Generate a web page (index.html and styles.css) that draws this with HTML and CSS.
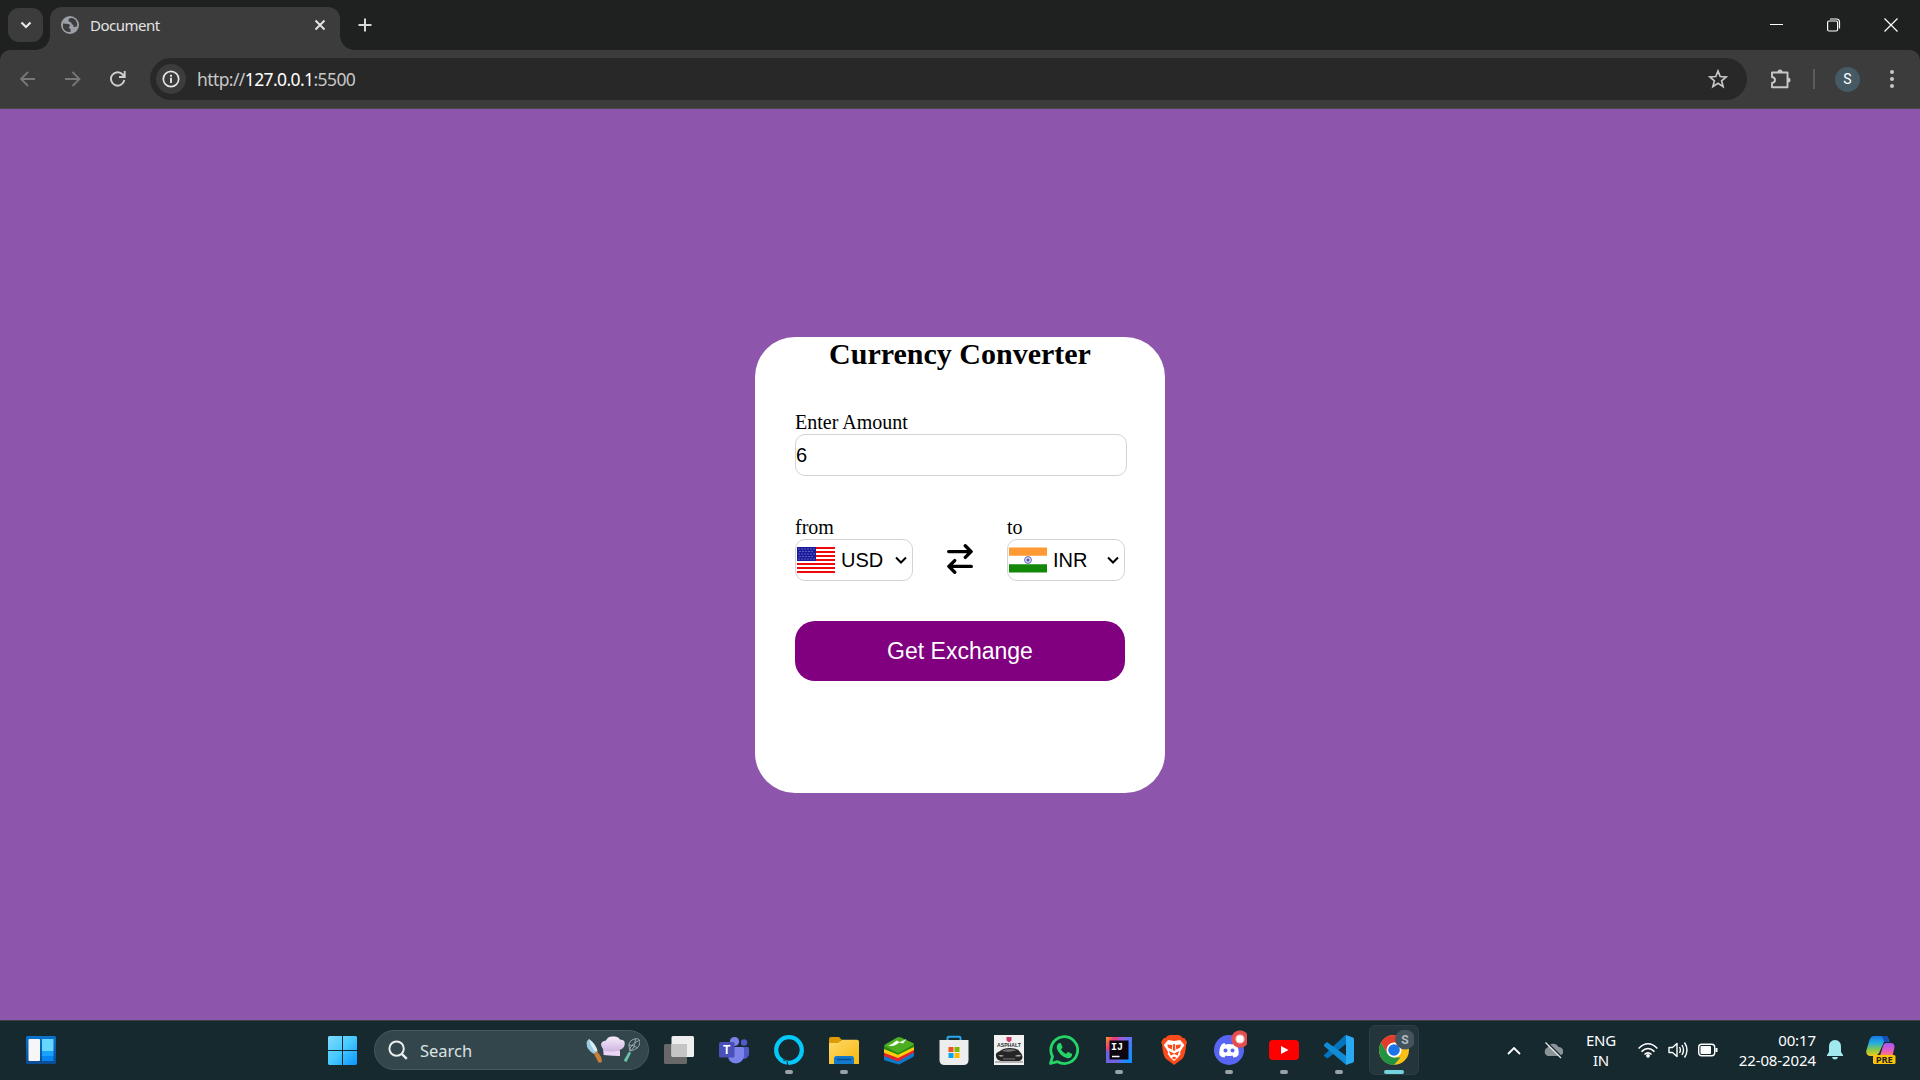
FILE: index.html
```html
<!DOCTYPE html>
<html lang="en">
<head>
<meta charset="utf-8">
<title>Document</title>
<link rel="stylesheet" href="styles.css">
</head>
<body>
<div class="tabstrip">
  <div class="tab-search"><svg width="12" height="8" viewBox="0 0 12 8"><path d="M1.5 1.5 6 6l4.5-4.5" fill="none" stroke="#e8e8e8" stroke-width="2.2"/></svg></div>
  <div class="tab">
    <svg class="globe" width="18" height="18" viewBox="0 0 18 18"><circle cx="9" cy="9" r="9" fill="#9aa0a6"/><path d="M2 7.400 5 7.800Q9 7.800 9.200 9.800L7.500 11.600 9.500 13V16Q4 16.500 2 11.500ZM10.500 2Q7.500 2 7.500 4.400 7.700 6 10 6.200 10.600 8.600 12.500 9L12.300 11 16 10.500Q16.800 4 12 2.200Z" fill="#3c3c3c"/></svg>
    <span class="tab-title">Document</span>
    <svg class="tab-close" width="12" height="12" viewBox="0 0 12 12"><path d="m1.500 1.500 9 9m0-9-9 9" stroke="#e3e3e3" stroke-width="2"/></svg>
  </div>
  <svg class="new-tab" width="14" height="14" viewBox="0 0 14 14"><path d="M7 .5v13M.5 7h13" stroke="#d8d8d8" stroke-width="2"/></svg>
  <div class="window-controls">
    <svg width="14" height="14" viewBox="0 0 14 14"><path d="M0 6.500h13" stroke="#fff"/></svg>
    <svg width="14" height="14" viewBox="0 0 14 14"><path d="M3 1h6.500q3 0 3 3v6.500" fill="none" stroke="#fff" stroke-width="1.200"/><rect x=".6" y="3" width="10" height="10" rx="1.500" fill="none" stroke="#fff" stroke-width="1.200"/></svg>
    <svg width="14" height="14" viewBox="0 0 14 14"><path d="m.5.500 13 13m0-13-13 13" stroke="#fff" stroke-width="1.200"/></svg>
  </div>
</div>
<div class="toolbar-wrap"><div class="toolbar">
  <div class="nav">
    <svg width="16" height="16" viewBox="0 0 16 16"><path d="M15 8H1M8 1 1 8l7 7" fill="none" stroke="#777" stroke-width="1.800"/></svg>
    <svg width="16" height="16" viewBox="0 0 16 16"><path d="M0 8h14M7.500 1l7 7-7 7" fill="none" stroke="#777" stroke-width="1.800"/></svg>
    <svg width="16" height="16" viewBox="0 0 16 16"><path d="M14.300 9A6.700 6.700 0 1 1 12.700 3.500L14.500 5.500M14.700 0V6H9" fill="none" stroke="#cfcfcf" stroke-width="1.900"/></svg>
  </div>
  <div class="omnibox">
    <div class="info"><svg width="18" height="18" viewBox="0 0 18 18"><circle cx="9" cy="9" r="7.700" fill="none" stroke="#e3e3e3" stroke-width="1.700"/><path d="M9 7.800V13M9 4.800v2" stroke="#e3e3e3" stroke-width="1.900"/></svg></div>
    <span class="url">http://<b>127.0.0.1</b>:5500</span>
    <svg class="star" width="20" height="20" viewBox="0 0 20 20"><path d="m10 2 2.200 5.500 6 .4-4.600 3.900 1.500 5.800L10 14.300l-5.100 3.300 1.500-5.800L1.800 7.900l6-.4Z" fill="none" stroke="#c7c7c7" stroke-width="1.700"/></svg>
  </div>
  <svg class="puzzle" width="22" height="22" viewBox="0 0 22 22"><path d="M2 4.500H17.500V19.300H2V15Q5 14.500 5 12T2 9Z" fill="none" stroke="#c7c7c7" stroke-width="1.900" stroke-linejoin="round"/><path d="M7.500 4a2.500 2.500 0 0 1 5 0ZM18 9.500a2.500 2.500 0 0 1 0 5Z" fill="#c7c7c7"/></svg>
  <div class="divider"></div>
  <div class="avatar">S</div>
  <svg class="dots" width="6" height="20" viewBox="0 0 6 20"><g fill="#c7c7c7"><circle cx="3" cy="3" r="2"/><circle cx="3" cy="10" r="2"/><circle cx="3" cy="17" r="2"/></g></svg>
</div></div>

<main class="page">
  <div class="card">
    <h2>Currency Converter</h2>
    <div class="amount"><p>Enter Amount</p><div class="field amount-field">6</div></div>
    <div class="dropdowns">
      <div class="currency"><p>from</p>
        <div class="field select">
          <svg width="38" height="26" viewBox="0 0 38 26"><path fill="#fff" d="M0 0h38v26H0z"/><path d="M0 1h38M0 5h38M0 9h38M0 13h38M0 17h38M0 21h38M0 25h38" stroke="#f00b0b" stroke-width="2"/><path fill="#1a1a9c" d="M0 0h19v14H0z"/><path d="M1.500 2h17M2.500 4.500h15M1.500 7h17M2.500 9.500h15M1.500 12h17" stroke="#9d9ddd" stroke-dasharray="1 2"/></svg>
          <span>USD</span>
          <svg class="caret" width="12" height="8" viewBox="0 0 12 8"><path d="M1 1.500l5 5 5-5" fill="none" stroke="#000" stroke-width="2"/></svg>
        </div>
      </div>
      <svg class="swap" width="26" height="30" viewBox="0 0 26 30"><path d="M1.700 7.600h22M18.300 1.800l5.800 5.800-5.800 5.800M24.300 22.400h-22M7.700 16.600l-5.800 5.800 5.800 5.800" fill="none" stroke="#000" stroke-width="3.400" stroke-linecap="round" stroke-linejoin="round"/></svg>
      <div class="currency"><p>to</p>
        <div class="field select">
          <svg width="38" height="26" viewBox="0 0 38 26"><path fill="#fff" d="M0 0h38v26H0z"/><path fill="#f93" d="M0 .5h38v8.300H0z"/><path fill="#138808" d="M0 17.200h38v8.300H0z"/><circle cx="19" cy="13" r="3.400" fill="#dcdcf2" stroke="#6464bd"/><circle cx="19" cy="13" r="1.500" fill="#5050aa"/></svg>
          <span>INR</span>
          <svg class="caret" width="12" height="8" viewBox="0 0 12 8"><path d="M1 1.500l5 5 5-5" fill="none" stroke="#000" stroke-width="2"/></svg>
        </div>
      </div>
    </div>
    <button class="exchange">Get Exchange</button>
  </div>
</main>

<footer class="taskbar">
  <svg class="widgets" width="30" height="28" viewBox="0 0 30 28"><defs>
    <linearGradient id="wg" x2="0" y2="1"><stop stop-color="#0873cf"/><stop offset="1" stop-color="#0b4c94"/></linearGradient>
    <linearGradient id="win" x2="1" y2="1"><stop stop-color="#80dcff"/><stop offset=".5" stop-color="#45c8ff"/><stop offset="1" stop-color="#0a94ff"/></linearGradient></defs>
    <rect width="30" height="28" rx="1.500" fill="url(#wg)"/><rect x="2.500" y="3" width="11.500" height="22" rx="1" fill="#f6f6f6"/><path fill="#66d6ff" d="M16 3h11.500v12H16z"/><path fill="#18a2fb" d="M16 15h11.500v5H16z"/><path fill="#0486ee" d="M16 20h11.500v5H16z"/></svg>
  <svg class="start" width="29" height="29" viewBox="0 0 29 29"><path d="M1 0h13v14H0V1ZM15 0h13l1 1v13H15ZM0 15h14v14H1l-1-1ZM15 15h14v13l-1 1H15Z" fill="url(#win)"/></svg>
  <div class="search">
    <svg width="20" height="20" viewBox="0 0 20 20"><circle cx="8.600" cy="8.600" r="7.200" fill="none" stroke="#e9eded" stroke-width="2"/><path d="m13.800 13.800 5 5" stroke="#e9eded" stroke-width="2.400"/></svg>
    <span>Search</span>
    <svg class="chef" width="54" height="28" viewBox="0 0 54 28"><defs><linearGradient id="hat" x2="0" y2="1"><stop stop-color="#f5ebfa"/><stop offset="1" stop-color="#c5a5da"/></linearGradient></defs>
      <path d="M3 3Q10 8 11.500 15L8 18Q-1 13 1 5Z" fill="#9bcbe0"/><path d="M3 3Q9 8 11.500 15l-1.500 1Q5 12 3 3Z" fill="#d9eef5"/><path d="m8 18 3-3 3.500 5q2 4 1 6.500h-3Z" fill="#c97e38"/>
      <path d="M17 13Q12 6 20 4.500 22 0 27 .5q5-.5 7 3 6 0 4.500 6-1 3-5 4.500V20l-16-1Z" fill="url(#hat)"/><path d="M18 14.500q7 2 16 0V20l-16-1Z" fill="#e9d7f3"/>
      <path d="m38 24 5-8.500 2 1.500-4.500 9q-2 0-2.500-2Z" fill="#66c6a5"/><g fill="none" stroke="#98a7ad" stroke-width="1"><path d="M44 15Q41 6 47 3.500t7 2Q54 13 44 15ZM44 15q-1-6 9-10.500M44 15q5-2 5.500-12M42.500 9q6 0 9 3"/></g></svg>
  </div>
  <div class="apps">
    <div class="app"><svg width="30" height="30" viewBox="0 0 30 30"><rect y="9" width="23" height="20" rx="1.500" fill="#686868"/><rect x="7.500" y="1" width="22.500" height="21" rx="1.500" fill="#eee"/><path fill="#c5c5c5" d="M7.500 9H23v11q0 2-1.500 2H9q-1.500 0-1.500-1.500Z"/></svg></div>
    <div class="app"><svg width="30" height="30" viewBox="0 0 30 30"><circle cx="15.500" cy="6.500" r="4.600" fill="#7b83eb"/><circle cx="25" cy="7.500" r="3.200" fill="#5059c9"/><path d="M19 12h9.500q1.500 0 1.500 1.500V19q-1 5-6 5-5 0-5-5Z" fill="#5059c9"/><path d="M9 12h14.500q1.500 0 1.500 1.500V21q-1 7-8 7.500-8-.5-8-8.500Z" fill="#7b83eb"/><rect y="7" width="15.500" height="15.500" rx="1.500" fill="#4950b8"/><text x="7.700" y="19.200" class="t-mark">T</text></svg></div>
    <div class="app open"><svg width="30" height="30" viewBox="0 0 30 30"><circle cx="15" cy="15" r="12.800" fill="none" stroke="#05c8fa" stroke-width="4.300"/><path d="M13 30Q13.500 25 8.500 24.500L9.500 25.700 13.500 26.600 14.500 30Z" fill="#15292f"/></svg></div>
    <div class="app open"><svg width="30" height="30" viewBox="0 0 30 30"><defs><linearGradient id="fold" x2="1" y2="1"><stop stop-color="#ffd96b"/><stop offset="1" stop-color="#f8b80e"/></linearGradient></defs><path d="M0 4q0-2 2-2h8l3 3h-1L10 9H0Z" fill="#dd9c05"/><path d="M0 8h9l4-3.200h15q2 0 2 1.700V29H0Z" fill="url(#fold)"/><path d="M5 29v-5.500q0-2.500 2.500-2.500h15q2.500 0 2.500 2.500V29Z" fill="#1379cc"/><path d="M8.500 24.500h13" stroke="#064c8c" stroke-width="1.500" stroke-linecap="round"/></svg></div>
    <div class="app"><svg width="30" height="30" viewBox="0 0 30 30"><path d="M0 20v4q0 1 1 1.500L13 29q2 .8 3 0l13-7q1-.6 1-2v-4Z" fill="#0d79c9"/><path d="M0 17v4l14 5.500 16-9V13Z" fill="#e3222c"/><path d="M0 13.500v4.300L14 23l16-8V9Z" fill="#ffce0b"/><path d="M0 10.500v3.500l14 5.700L30 12V8.500Z" fill="#268a14"/><path d="m1 9.500 12-7q2-1.200 4 0l12 5.500q1.300.7 0 1.700l-13 7.500q-2 1-4 0L1 11.300q-1-.8 0-1.800Z" fill="#4eae21"/><path d="M4 10.500Q9 9 12.500 5.500L16 7l6.500-3-3.500 4.500-4-1Q11 12 4 10.500Z" fill="#f3fff0"/></svg></div>
    <div class="app"><svg width="30" height="30" viewBox="0 0 30 30"><path d="M8.500 6V3q0-1.200 1.200-1.200h10.600Q21.500 1.800 21.500 3v3" fill="none" stroke="#27a8ed" stroke-width="2"/><path d="M.5 5h29v20q0 5-5 5h-19q-5 0-5-5Z" fill="#ededed"/><path fill="#f25022" d="M9.500 12h5v5h-5z"/><path fill="#7fba00" d="M15.500 12h5v5h-5z"/><path fill="#00a4ef" d="M9.500 18h5v5h-5z"/><path fill="#ffb900" d="M15.500 18h5v5h-5z"/></svg></div>
    <div class="app"><svg width="30" height="30" viewBox="0 0 30 30"><path fill="#f1f1f1" d="M0 0h30v30H0z"/><path d="M12.500 2h5v3.500L15 7.500l-2.500-2Z" fill="#c63b68"/><text x="15" y="12" class="asphalt" textLength="24" lengthAdjust="spacingAndGlyphs">ASPHALT</text><path d="M2 21q-1-3 4-5 3-3 10-3 8 0 10 4 2.500 2 2.500 5 0 3-3.500 4H7q-5-1-5-5Z" fill="#252525"/><path d="M7.500 16q3-2 9-2 4 0 6 1.500l-8 1.500Z" fill="#707070"/><path d="M4 20.500q4-1 6 .5l-3 .7ZM21 21q3-2 6-1l-1 1.500h-4Z" fill="#aaa"/><path d="M9 24h12M1 27h28" stroke="#787878"/></svg></div>
    <div class="app"><svg width="30" height="30" viewBox="0 0 30 30"><path d="m1.500 28.500 2-7A13.400 13.400 0 1 1 8.600 26.700Z" fill="none" stroke="#25d366" stroke-width="2.800" stroke-linejoin="round"/><path d="M10.200 8Q11.800 7.500 12.300 9l1.200 3q.2.700-1.500 2.500 2 3.500 5 4.500l1.500-1.800q.5-.4 1.200 0l3 1.500q.8.500.3 2-1.200 2.800-4.500 2.500Q11 21.500 8 14q-1-4.500 2.200-6Z" fill="#25d366"/></svg></div>
    <div class="app open"><svg width="30" height="30" viewBox="0 0 30 30"><defs><linearGradient id="ij" x2="1" y2=".6"><stop stop-color="#f99b28"/><stop offset=".25" stop-color="#f13675"/><stop offset=".5" stop-color="#9463e9"/><stop offset="1" stop-color="#168cff"/></linearGradient></defs><path d="M2 2h26v26H2z" fill="url(#ij)"/><path d="M2 14v14h15Z" fill="#7163df"/><path fill="#0b0610" d="M5.500 5.500h19v19h-19z"/><text x="7" y="15.200" class="ij">IJ</text><path d="M8 21.500h7.500" stroke="#fff" stroke-width="1.500"/></svg></div>
    <div class="app"><svg width="30" height="30" viewBox="0 0 30 30"><g transform="translate(2.200 0) scale(.86 1)"><path d="m7 1 3-1h10l3 1 2 2h2l3 4-1 3Q28 20 25 23.500L15 30 5 23.500Q2 20 1 10L0 7l3-4h2Z" fill="#fb4a1b"/><path d="m8 5 7 1 7-1 5 5-3 4-2 3 .5 2-3.500 4-4 3-4-3-3.500-4 .5-2-2-3-3-4Z" fill="#fff"/><path d="m7 9.500 6 .5-.5 4.500-4.500-2ZM23 9.500l-6 .5.500 4.500 4.500-2ZM14 9h2l.5 6-1.500 1-1.500-1ZM9 16l6 2.500 6-2.500-2 4.500-4-1.500-4 1.500ZM12 23l3-1.500 3 1.500-3 1.500Z" fill="#fb4a1b"/></g></svg></div>
    <div class="app open"><svg width="36" height="40" viewBox="-3 -5 36 40"><circle cx="15" cy="15" r="15" fill="#5865f2"/><path d="M10.500 8 8 9Q4.500 14 5.500 20q2 2.500 5 2.500l1-2q3.500 1 7 0l1 2q3 0 5-2.500 1-6-2.500-11l-2.500-1-1 1.500q-3.500-.8-7 0Z" fill="#fff"/><circle cx="11.500" cy="15.500" r="2" fill="#5865f2"/><circle cx="18.500" cy="15.500" r="2" fill="#5865f2"/><circle cx="26" cy="4" r="8.700" fill="#e34e50"/><circle cx="26" cy="4" r="4.100" fill="#fff" stroke="#f5b6b7"/></svg></div>
    <div class="app open"><svg width="30" height="30" viewBox="0 0 30 30"><rect y="5" width="30" height="20" rx="4" fill="red"/><path d="m12 11 7.500 4-7.500 4Z" fill="#fff"/></svg></div>
    <div class="app open"><svg width="30" height="30" viewBox="0 0 30 30"><path d="M22 0v9L3.500 23.500 0 21v-1L20.500.8Z" fill="#0674bd"/><path d="m0 9.500 3-2.500L23 21.500V30l-2-1L0 11Z" fill="#128bd5"/><path d="m22 0 7 2.500q1 .5 1 1.500v22q0 1-1 1.500L22 30Z" fill="#28a9f1"/></svg></div>
    <div class="app open active"><svg width="40" height="40" viewBox="-5 -5 40 40"><circle cx="15" cy="15" r="15" fill="#fbc116"/><path d="M2 7.500Q6 0 15 0t13 7.500H15L8.500 18.700Z" fill="#e33b2e"/><path d="M2 7.500 8.500 18.800 15 22.500h6.500L15 30Q6 30 2 22.500T2 7.500Z" fill="#229342"/><circle cx="15" cy="15" r="7.500" fill="#fff"/><circle cx="15" cy="15" r="5.800" fill="#1a73e8"/><circle cx="26" cy="4.500" r="10" fill="#43545e"/><text x="26" y="9" class="profile-s">S</text></svg></div>
  </div>
  <div class="tray">
    <svg class="chevron" width="14" height="9" viewBox="0 0 14 9"><path d="m1 8 6-6 6 6" fill="none" stroke="#fff" stroke-width="1.800"/></svg>
    <svg class="cloud" width="20" height="18" viewBox="0 0 20 18"><path d="M5 15a4.500 4.500 0 0 1-.5-8.500 6 6 0 0 1 11-.5 4.500 4.500 0 0 1 .5 9Z" fill="#8a9497"/><path d="M3.800 1 18.800 16" stroke="#15292f" stroke-width="1.500"/><path d="M2.500 1.500 18 17" stroke="#e8eaea" stroke-width="1.300"/></svg>
    <div class="lang"><div>ENG</div><div>IN</div></div>
    <div class="status">
      <svg width="20" height="20" viewBox="0 0 20 20"><g fill="none" stroke="#fff" stroke-width="1.500"><path d="M.6 8.500q9.400-9.400 18.800 0M3.500 11.600q6.500-6.300 13 0M6.500 14.500q3.500-3.300 7 0"/></g><circle cx="10" cy="15.800" r="1.900" fill="#fff"/></svg>
      <svg width="20" height="20" viewBox="0 0 20 20"><g fill="none" stroke="#fff" stroke-width="1.400" stroke-linejoin="round"><path d="M1 7.500h3.500L9 3.500v13l-4.500-4H1ZM11.500 7q1.800 3 0 6M14 5q3 5 0 10M16.500 2.500q5 7.500 0 15"/></g></svg>
      <svg width="20" height="20" viewBox="0 0 20 20"><rect x=".7" y="4.200" width="16" height="11.600" rx="3" fill="none" stroke="#fff" stroke-width="1.400"/><rect x="2.500" y="6" width="10.500" height="8" rx="1" fill="#fff"/><path d="M18.500 8v4" stroke="#fff" stroke-width="2"/></svg>
    </div>
    <div class="clock"><div>00:17</div><div>22-08-2024</div></div>
    <svg class="bell" width="16" height="20" viewBox="0 0 16 20"><path d="M8 0Q14 .5 14 6.500V12l2 3v1H0v-1l2-3V6.500Q2 .5 8 0ZM5 17h6q-.5 2.500-3 2.500T5 17Z" fill="#a0e9ec"/></svg>
    <svg class="copilot" width="30" height="30" viewBox="0 0 30 30"><defs><linearGradient id="ca" x2="0" y2="1"><stop stop-color="#1878e8"/><stop offset=".35" stop-color="#20aee0"/><stop offset=".7" stop-color="#8fc845"/><stop offset="1" stop-color="#f0cc20"/></linearGradient><linearGradient id="cb" x2="0" y2="1"><stop stop-color="#a35af0"/><stop offset=".6" stop-color="#e55bc0"/><stop offset="1" stop-color="#ff855f"/></linearGradient></defs><path d="M8 1h11q3 0 3.500 3l1 3H18l-5 11-3 3H4q-4-.5-3.800-5L3.500 5Q5 1 8 1Z" fill="url(#ca)"/><path d="M15 1h5q2 .5 3 6h-5q-1-5-3-6Z" fill="#164dba"/><path d="M20 8h5q3.500 0 3.500 4l-2 9H14l3-10q.8-3 3-3Z" fill="url(#cb)"/><rect x="7" y="20" width="22.500" height="9" rx="1.500" fill="#fdc30a"/><text x="18.200" y="27.500" class="pre" textLength="17" lengthAdjust="spacingAndGlyphs">PRE</text></svg>
  </div>
</footer>
</body>
</html>
```
FILE: styles.css
```css
* { box-sizing: border-box; margin: 0; padding: 0; }
body { width: 1920px; height: 1080px; overflow: hidden; display: flex; flex-direction: column; font-family: "Noto Sans", sans-serif; }
svg { display: block; flex: none; }

.tabstrip { height: 50px; background: #1f2120; display: flex; align-items: center; padding-left: 8px; }
.tab-search { width: 35px; height: 34px; border-radius: 11px; background: #3c3c3c; display: flex; align-items: center; justify-content: center; }
.tab { position: relative; width: 290px; height: 43px; align-self: flex-end; margin-left: 7px; padding: 0 14px 7px 11px; background: #3c3c3c; border-radius: 12px 12px 0 0; display: flex; align-items: center; }
.tab::before, .tab::after { content: ""; position: absolute; bottom: 0; width: 14px; height: 14px; }
.tab::before { left: -14px; background: radial-gradient(circle at 0 0, transparent 13.500px, #3c3c3c 14px); }
.tab::after { right: -14px; background: radial-gradient(circle at 100% 0, transparent 13.500px, #3c3c3c 14px); }
.tab-title { margin-left: 11px; font-size: 15px; color: #e3e3e3; letter-spacing: -.5px; }
.tab-close { margin-left: auto; }
.new-tab { margin-left: 18px; }
.window-controls { margin-left: auto; margin-right: 22px; display: flex; gap: 43px; }

.toolbar-wrap { height: 59px; background: #1f2120; }
.toolbar { height: 59px; background: #3c3c3c; border-bottom: 1px solid #4c4a4d; border-radius: 10px 10px 0 0; display: flex; align-items: center; padding: 0 25px 0 20px; }
.nav { display: flex; gap: 29px; width: 130px; }
.omnibox { width: 1597px; height: 42px; border-radius: 21px; background: #282828; display: flex; align-items: center; padding: 0 19px 0 6px; }
.info { width: 30px; height: 30px; border-radius: 50%; background: #3c3c3c; display: flex; align-items: center; justify-content: center; }
.url { margin-left: 11px; font-size: 17.500px; letter-spacing: -.6px; color: #c7c7c7; }
.url b { font-weight: 400; color: #fff; }
.star { margin-left: auto; }
.puzzle { margin-left: 23px; }
.divider { width: 2px; height: 20px; margin-left: 21px; background: #5c5c5c; }
.avatar { width: 25px; height: 25px; border-radius: 50%; margin-left: 20px; background: #455a64; color: #fff; font: 14px/25px Roboto, sans-serif; text-align: center; }
.dots { margin-left: auto; }

.page { height: 911px; background: #8d55ac; display: flex; align-items: center; justify-content: center; }
.card { width: 410px; height: 456px; border-radius: 40px; background: #fff; padding: 0 40px; font: 20px/22px "Liberation Serif", serif; color: #000; }
.card h2 { font-size: 30px; line-height: 33px; padding-bottom: 2px; text-align: center; white-space: nowrap; }
.card p { line-height: 21px; padding-bottom: 1px; }
.amount { margin-top: 40px; }
.field { border: 1px solid #d3d3d3; border-radius: 10px; height: 42px; font-family: "Liberation Sans", sans-serif; font-size: 20px; display: flex; align-items: center; }
.amount-field { width: 332px; }
.dropdowns { margin-top: 41px; display: flex; justify-content: space-between; align-items: flex-end; }
.currency { width: 118px; }
.select { padding: 0 5px 0 1px; }
.select span { margin-left: 6px; }
.caret { margin-left: auto; }
.swap { margin-bottom: 7px; }
.exchange { display: block; width: 330px; height: 60px; margin-top: 40px; padding-top: 2px; border: 0; border-radius: 20px; background: purple; color: #fff; font: 23px "Liberation Sans", sans-serif; }

.taskbar { height: 60px; background: #15292f; border-top: 1px solid #3a4447; display: flex; align-items: center; padding: 0 24px 1px 26px; color: #fff; }
.start { margin-left: 272px; }
.search { width: 275px; height: 40px; margin-left: 17px; border: 1px solid #48595d; border-radius: 20px; background: #33464b; display: flex; align-items: center; padding: 0 8px 0 13px; }
.search span { margin-left: 12px; font-size: 16.500px; color: #dce1e2; }
.chef { margin-left: auto; }
.apps { display: flex; margin-left: 2.500px; }
.app { position: relative; width: 55px; height: 50px; display: flex; align-items: center; justify-content: center; }
.app.active { width: 50px; margin-left: 2.500px; border-radius: 6px; border: 1px solid #2d3f44; background: #24363c; }
.open::after { content: ""; position: absolute; left: 50%; bottom: 1px; width: 8px; height: 4px; margin-left: -4px; border-radius: 2px; background: #9aa3a5; }
.active::after { width: 20px; margin-left: -10px; bottom: 0; background: #72d3dc; }
.t-mark { font: bold 12px "Liberation Sans", sans-serif; fill: #fff; text-anchor: middle; }
.asphalt { font: bold 5px "Liberation Sans", sans-serif; fill: #333; text-anchor: middle; }
.ij { font: bold 10px "Liberation Mono", monospace; fill: #fff; }
.profile-s { font: bold 12px Roboto, sans-serif; fill: #b2bbc0; text-anchor: middle; }
.pre { font: bold 8px "Noto Sans", sans-serif; fill: #222; text-anchor: middle; }

.tray { margin-left: auto; display: flex; align-items: center; font-size: 15px; line-height: 20px; letter-spacing: -.1px; }
.cloud { margin-left: 22px; }
.lang { width: 66px; margin-left: 5px; text-align: center; letter-spacing: -.2px; }
.lang, .clock { padding-bottom: 1px; }
.status { display: flex; gap: 10px; margin-left: 4px; }
.clock { width: 98px; text-align: right; }
.bell { margin-left: 11px; }
.copilot { margin-left: 23px; }
```
